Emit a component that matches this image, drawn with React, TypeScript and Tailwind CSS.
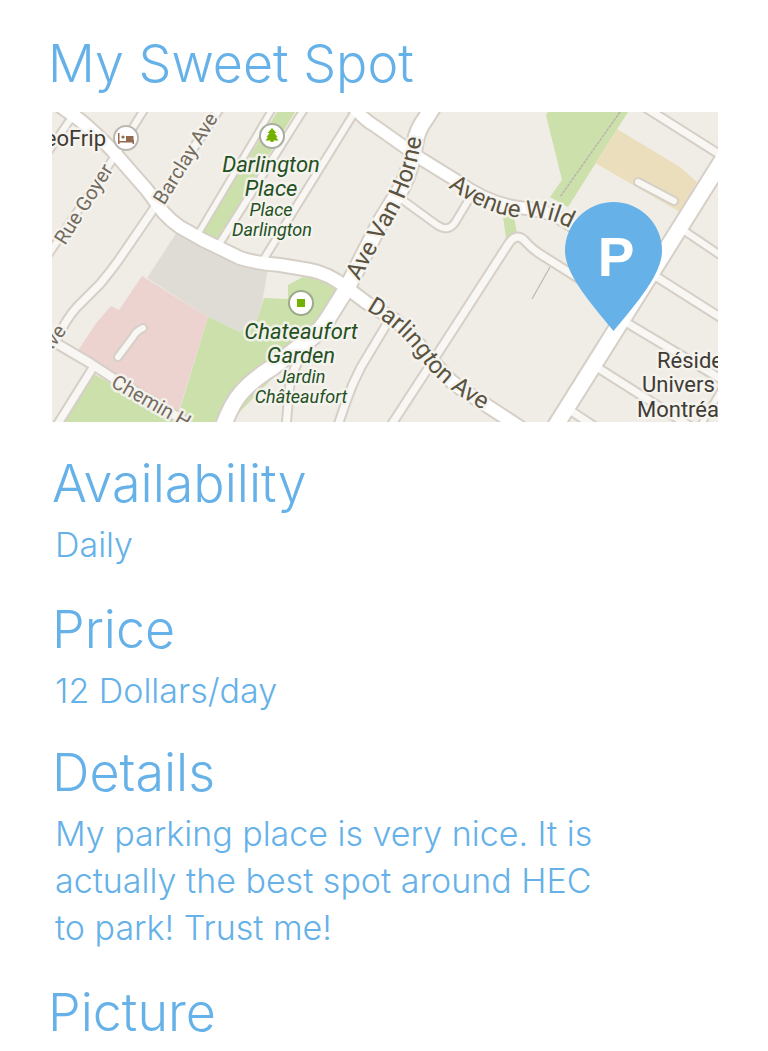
import type { ReactNode } from "react";

const mainRoads = [
  { d: "M60 106 L70 113 C80 119 100 137 112 150 L147 190 L163 212 Q171 221 180 227 L203 240 L240 258 Q255 263 280 265 L310 270 Q328 273 347 288 L367 303 L393 319 Q405 328 415 340 L443 373 Q450 381 460 388 L512 422 L530 434", w: 12 },
  { d: "M436 102 L426 118 Q417 130 415 143 Q412 166 402 187 L380 223 L347 288 L327 320 Q315 338 300 346 L273 367 Q252 380 241 393 Q230 406 222 430", w: 15 },
  { d: "M350 104 L358 112 Q366 121 375 126 L423 160 L457 181 Q490 205 523 208 Q560 211 590 240", w: 11 },
  { d: "M552 432 L558 422 L718 167 L728 151", w: 15 },
];

const minorRoads = [
  { d: "M147 105 L117 153 L46 258", w: 6 },
  { d: "M46 155 L74 114", w: 6 },
  { d: "M221 106 L155 207 L118 261 Q110 272 100 284 L77 307 Q65 320 54 345", w: 7 },
  { d: "M274 106 L198 234", w: 5 },
  { d: "M306 106 L218 246", w: 6 },
  { d: "M356 110 L262 262", w: 6 },
  { d: "M404 201 L437 225 Q449 233 456 221 L471 196", w: 6 },
  { d: "M388 430 L440 350 L509 243 Q516 233 524 240 Q532 249 540 254 L610 298", w: 7 },
  { d: "M388 322 L361 367 Q352 384 346 402 L337 428", w: 7 },
  { d: "M286 428 L289 392 Q290 370 306 350", w: 7 },
  { d: "M44 336 L90 363 L113 378 L186 422", w: 8 },
  { d: "M94 366 L54 430", w: 7 },
  { d: "M643 106 L722 156", w: 7 },
  { d: "M680 228 L726 259", w: 6 },
  { d: "M652 274 L726 321", w: 7 },
  { d: "M622 320 L726 382", w: 7 },
  { d: "M595 366 L696 430", w: 7 },
  { d: "M568 409 L600 430", w: 7 },
  { d: "M698 430 L724 385", w: 5 },
  { d: "M638 182 L674 201", w: 6 },
  { d: "M143 328 Q136 331 133 337 L118 357", w: 6 },
];

function Label({ children, x, y, size = 22, color = "#24501f", italic = false, anchor = "middle" }: {
  children: ReactNode; x: number; y: number; size?: number; color?: string; italic?: boolean; anchor?: "start" | "middle" | "end";
}) {
  return (
    <text x={x} y={y} fontSize={size} fill={color} fontStyle={italic ? "italic" : "normal"} textAnchor={anchor}>
      {children}
    </text>
  );
}

function StreetLabel({ id, d, children, size = 24, color = "#5a5340" }: {
  id: string; d: string; children: ReactNode; size?: number; color?: string;
}) {
  return (
    <>
      <path id={id} d={d} fill="none" stroke="none" />
      <text fontSize={size} fill={color}>
        <textPath href={`#${id}`}>{children}</textPath>
      </text>
    </>
  );
}

function SpotMap() {
  return (
    <svg viewBox="52 112 666 310" className="block h-auto w-full" role="img" aria-label="Map of the parking spot">
      <rect x="52" y="112" width="666" height="310" fill="#f0ede6" />

      <path d="M277 112 L295 112 L217 240 L202 232Z" fill="#cbe0aa" />
      <path d="M548 112 L546 115 L562 180 L550 197 L568 207 L628 112Z" fill="#cbe0aa" />
      <path d="M503 216 L506 239 L517 234 L514 216Z" fill="#cbe0aa" />
      <path d="M617 129 L680 167 L697 182 L680 212 L595 163Z" fill="#eadebd" />
      <path d="M177 232 L268 268 L262 303 L257 320 L240 332 L208 317 L147 278Z" fill="#dfdbd5" />
      <path d="M208 317 L240 332 L257 320 L264 298 L288 299 L288 285 L303 277 L334 280 L340 300 L300 350 L230 422 L176 422Z" fill="#cbe0aa" />
      <path d="M142 276 L208 317 L176 420 L77 352 L97 322 L111 306 L119 310Z" fill="#ecd3d0" />
      <path d="M94 374 L180 422 L64 422Z" fill="#cbe0aa" />
      <path d="M119 310 L137 322 M116 358 L107 369" stroke="#dfd8cf" fill="none" />
      <path d="M550 267 L532 299" stroke="#bdb9b2" strokeWidth="1.2" />
      <path d="M620 112 L560 197" stroke="#b9b4ac" strokeWidth="1.5" strokeDasharray="3 1" />

      <g fill="none" strokeLinecap="round" strokeLinejoin="round">
        {minorRoads.map((r) => <path key={r.d} d={r.d} stroke="#d6cfc7" strokeWidth={r.w + 4} />)}
        {mainRoads.map((r) => <path key={r.d} d={r.d} stroke="#d6cfc7" strokeWidth={r.w + 4} />)}
        {minorRoads.map((r) => <path key={r.d} d={r.d} stroke="#f8f7f3" strokeWidth={r.w} />)}
        {mainRoads.map((r) => <path key={r.d} d={r.d} stroke="#ffffff" strokeWidth={r.w} />)}
      </g>

      <g className="font-['Roboto',sans-serif] font-normal" stroke="#f6f4ef" strokeOpacity="0.9" strokeWidth="5" strokeLinejoin="round" style={{ paintOrder: "stroke" }}>
        <StreetLabel id="goyer" d="M65 246 L130 144" size={20} color="#736b5f">Rue Goyer</StreetLabel>
        <StreetLabel id="barclay" d="M164 206 L234 93" size={20} color="#736b5f">Barclay Ave</StreetLabel>
        <StreetLabel id="horne" d="M359 281 L393 220 Q422 170 424 110">Ave Van Horne</StreetLabel>
        <StreetLabel id="wilderton" d="M448 187 Q492 219 530 218 Q562 216 602 252">Avenue Wilde</StreetLabel>
        <StreetLabel id="darlington" d="M366 310 Q402 330 424 363 Q446 393 510 424">Darlington Ave</StreetLabel>
        <StreetLabel id="chemin" d="M110 386 L210 443" size={20} color="#736b5f">Chemin H</StreetLabel>
        <StreetLabel id="west" d="M47 357 L80 314" size={20} color="#736b5f">Ave</StreetLabel>
        <Label x={106} y={146} color="#403b35" anchor="end">eoFrip</Label>
        <Label x={271} y={172} italic>Darlington</Label>
        <Label x={271} y={196} italic>Place</Label>
        <Label x={271} y={216} size={18} italic>Place</Label>
        <Label x={272} y={236} size={18} italic>Darlington</Label>
        <Label x={301} y={339} italic>Chateaufort</Label>
        <Label x={301} y={363} italic>Garden</Label>
        <Label x={301} y={383} size={18} italic>Jardin</Label>
        <Label x={301} y={403} size={18} italic>Châteaufort</Label>
        <Label x={657} y={368} color="#403b35" anchor="start">Réside</Label>
        <Label x={642} y={392} color="#403b35" anchor="start">Univers</Label>
        <Label x={637} y={417} color="#403b35" anchor="start">Montréa</Label>
      </g>

      <g fill="#ffffff" strokeWidth="2">
        <circle cx="126" cy="138" r="12" stroke="#bbb7b1" />
        <circle cx="272" cy="136" r="12" stroke="#a9ada0" />
        <circle cx="301" cy="303" r="12" stroke="#9faa8b" />
      </g>
      <path d="M118 133 h1.500 v8 h13 v-1 h1.500 v4 h-1.500 v-1.500 h-13 v1.500 h-1.500z M126 136 h7.500 v5 h-7.500z" fill="#94694e" />
      <circle cx="123" cy="137" r="1.600" fill="#94694e" />
      <path d="M272 128 l4.500 5 h-2 l3 4 h-1.500 l2.500 3.500 h-5 v1.500 h-3 v-1.500 h-5 l2.500 -3.500 h-1.500 l3 -4 h-2z" fill="#74b000" />
      <rect x="297" y="299" width="8" height="8" fill="#74b000" />

      <path d="M613.500 202 A48.500 48.500 0 0 1 662 250.500 C662 272 642 297 613.500 331 C585 297 565 272 565 250.500 A48.500 48.500 0 0 1 613.500 202Z" fill="#65b1e8" />
      <text x="616" y="276" textAnchor="middle" fontSize="55" fill="#ffffff" className="font-['Liberation_Sans',Arial,sans-serif] font-bold">P</text>
    </svg>
  );
}

const heading = "text-[52px] leading-[60px]";
const body = "mt-[7px] pl-[3px] text-[34px] leading-[47px]";

export default function App() {
  return (
    <main className="min-h-screen bg-white pt-[34px] pr-[50px] pb-[6px] pl-[52px] font-['Inter',sans-serif] font-light text-[#65b1e8]">
      <h1 className={`${heading} -ml-1`}>My Sweet Spot</h1>
      <div className="mt-[18px]">
        <SpotMap />
      </div>
      <section className="mt-8">
        <h2 className={heading}>Availability</h2>
        <p className={body}>Daily</p>
      </section>
      <section className="mt-8">
        <h2 className={heading}>Price</h2>
        <p className={body}>12 Dollars/day</p>
      </section>
      <section className="mt-[29px]">
        <h2 className={heading}>Details</h2>
        <p className={`${body} max-w-[570px]`}>
          My parking place is very nice. It is actually the best spot around HEC to park! Trust me!
        </p>
      </section>
      <section className="mt-8">
        <h2 className={`${heading} -ml-1`}>Picture</h2>
      </section>
    </main>
  );
}
